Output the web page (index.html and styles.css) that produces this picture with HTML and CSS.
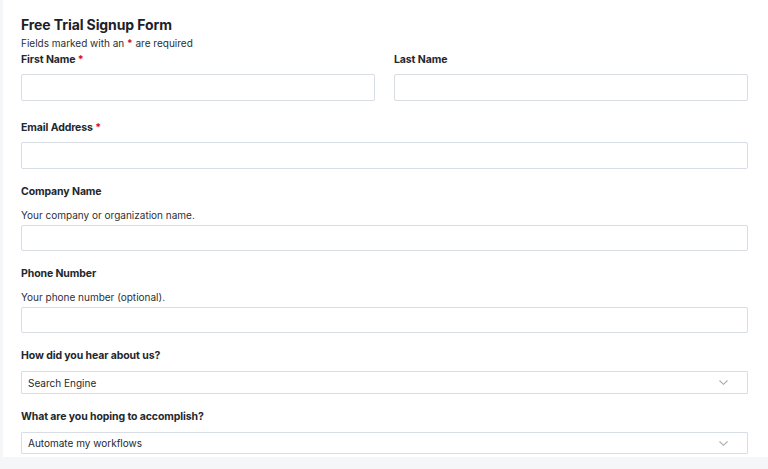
FILE: index.html
```html
<!DOCTYPE html>
<html lang="en">
<head>
<meta charset="utf-8">
<title>Free Trial Signup Form</title>
<link rel="stylesheet" href="styles.css">
</head>
<body>
<div class="panel">
  <form class="form">
    <h1 class="title">Free Trial Signup Form</h1>
    <p class="note">Fields marked with an <span class="req">*</span> are required</p>

    <div class="row">
      <div class="field">
        <label class="label">First Name <span class="req">*</span></label>
        <input class="input" type="text">
      </div>
      <div class="field">
        <label class="label">Last Name</label>
        <input class="input" type="text">
      </div>
    </div>

    <div class="field field-email">
      <label class="label">Email Address <span class="req">*</span></label>
      <input class="input" type="text">
    </div>

    <div class="field field-help">
      <label class="label">Company Name</label>
      <p class="help">Your company or organization name.</p>
      <input class="input" type="text">
    </div>

    <div class="field field-help">
      <label class="label">Phone Number</label>
      <p class="help">Your phone number (optional).</p>
      <input class="input" type="text">
    </div>

    <div class="field field-select">
      <label class="label">How did you hear about us?</label>
      <div class="select">
        <span class="select-value">Search Engine</span>
        <svg class="chev" width="9" height="5" viewBox="0 0 9 5"><path d="M0.5 0.5 L4.5 4.3 L8.5 0.5" fill="none" stroke="#a9acb3" stroke-width="1.1"/></svg>
      </div>
    </div>

    <div class="field field-select">
      <label class="label">What are you hoping to accomplish?</label>
      <div class="select">
        <span class="select-value">Automate my workflows</span>
        <svg class="chev" width="9" height="5" viewBox="0 0 9 5"><path d="M0.5 0.5 L4.5 4.3 L8.5 0.5" fill="none" stroke="#a9acb3" stroke-width="1.1"/></svg>
      </div>
    </div>
  </form>
</div>
</body>
</html>
```
FILE: styles.css
```css
* { box-sizing: border-box; }
html, body { margin: 0; padding: 0; }
body {
  background: #f5f6f7;
  font-family: Inter, "Helvetica Neue", Arial, sans-serif;
  color: #1e2228;
  height: 469px;
  overflow: hidden;
}
.panel {
  margin-left: 3px;
  background: #ffffff;
  height: 457px;
  padding: 16px 20px 0 18px;
}
.form { display: flex; flex-direction: column; }
.title {
  margin: 0;
  font-size: 14px;
  line-height: 17px;
  font-weight: 700;
  letter-spacing: -0.1px;
  color: #1d2127;
}
.note {
  margin: 3px 0 0;
  font-size: 10px;
  line-height: 14px;
  color: #2a2e35;
}
.req { color: #d60f1c; font-weight: 700; }
.row {
  display: grid;
  grid-template-columns: 1fr 1fr;
  column-gap: 19px;
  margin-top: 3px;
}
.row .label { margin-bottom: 7px; }
.field { display: flex; flex-direction: column; }
.label {
  font-size: 10.5px;
  line-height: 14px;
  font-weight: 700;
  letter-spacing: -0.1px;
  color: #23272e;
  margin-bottom: 8px;
}
.input {
  height: 27px;
  border: 1px solid #d8dce3;
  border-radius: 2px;
  background: #fff;
  outline: none;
  padding: 0 8px;
}
.field-email { margin-top: 20px; }
.field-email .label { margin-bottom: 7px; }
.field-help { margin-top: 16px; }
.field-help .label { margin-bottom: 9px; }
.help {
  margin: 0 0 3px;
  font-size: 10px;
  line-height: 14px;
  color: #2c3037;
}
.field-help .input { height: 26px; }
.field-select { margin-top: 16px; }
.field-select .label { margin-bottom: 8px; }
.select {
  height: 23px;
  border: 1px solid #d8dce3;
  border-radius: 1px;
  display: flex;
  align-items: center;
  justify-content: space-between;
  padding: 0 19px 0 6px;
}
.field-select + .field-select .select { height: 22px; }
.select-value { font-size: 10px; line-height: 14px; color: #25292f; }
.chev { display: block; }
```
